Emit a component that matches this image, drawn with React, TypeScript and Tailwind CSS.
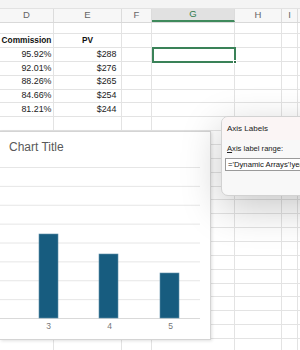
import React from "react";

const colW = ["w-[54px]", "w-[68px]", "w-[30px]", "w-[83px]", "w-[47px]", "w-[16px]", "w-[20px]"];
const letters = ["D", "E", "F", "G", "H", "I", ""];

const data: [string, string][] = [
  ["95.92%", "$288"],
  ["92.01%", "$276"],
  ["88.26%", "$265"],
  ["84.66%", "$254"],
  ["81.21%", "$244"],
];

function EmptyRow({ h }: { h: string }) {
  return (
    <div className={`flex ${h} shrink-0`}>
      {colW.map((w, i) => (
        <div key={i} className={`${w} shrink-0 border-r border-b border-[#e3e3e3]`} />
      ))}
    </div>
  );
}

export default function App() {
  const filler = Array.from({ length: 20 });
  return (
    <div className="relative w-[300px] h-[350px] overflow-hidden bg-white" style={{ fontFamily: '"Liberation Sans", Arial, sans-serif' }}>
      {/* top strip */}
      <div className="h-[9px] bg-[#f4f4f4] border-b border-[#e2e2e2]" />
      {/* column header */}
      <div className="flex h-[14px] bg-[#f7f7f7] border-b border-[#d9d9d9]">
        {colW.map((w, i) => (
          <div
            key={i}
            className={`${w} shrink-0 flex items-center justify-center text-[9.5px] border-r border-[#dcdcdc] ${
              i === 3 ? "bg-[#e1e1e1] text-[#2f7a4c] border-b-2 border-b-[#3f8a5c]" : "text-[#666666]"
            }`}
          >
            {letters[i]}
          </div>
        ))}
      </div>
      {/* rows */}
      <div className="flex flex-col">
        <EmptyRow h="h-[11px]" />
        <div className="flex h-[14px] shrink-0">
          <div className="w-[54px] shrink-0 border-r border-b border-[#e3e3e3] flex items-center justify-center text-[8.3px] font-bold text-[#111]">Commission</div>
          <div className="w-[68px] shrink-0 border-r border-b border-[#e3e3e3] flex items-center justify-center text-[8.3px] font-bold text-[#111]">PV</div>
          {colW.slice(2).map((w, i) => (
            <div key={i} className={`${w} shrink-0 border-r border-b border-[#e3e3e3]`} />
          ))}
        </div>
        {data.map(([a, b], r) => (
          <div key={r} className="flex h-[13.86px] shrink-0">
            <div className="w-[54px] shrink-0 border-r border-b border-[#e3e3e3] flex items-center justify-end pr-[1.5px] text-[8.9px] text-[#222]">{a}</div>
            <div className="w-[68px] shrink-0 border-r border-b border-[#e3e3e3] flex items-center justify-end pr-[4.5px] text-[8.9px] text-[#222]">{b}</div>
            {colW.slice(2).map((w, i) => (
              <div key={i} className={`${w} shrink-0 border-r border-b border-[#e3e3e3]`} />
            ))}
          </div>
        ))}
        {filler.map((_, i) => (
          <EmptyRow key={i} h="h-[13.86px]" />
        ))}
      </div>

      {/* selected cell G */}
      <div className="absolute left-[152px] top-[47px] w-[84px] h-[16px] border-2 border-[#3a8258]">
        <div className="absolute right-[-3px] bottom-[-3px] w-[4px] h-[4px] bg-[#2d6e47] border border-white" />
      </div>

      {/* chart */}
      <div className="absolute left-0 top-[131px] w-[211px] h-[209px] bg-white border border-l-0 border-[#d4d4d4] shadow-[1px_1px_3px_rgba(0,0,0,0.12)]">
        <div className="h-[35px] pl-[9px] pt-[6px] text-[12px] text-[#595959] leading-[18px]">Chart Title</div>
        <svg width="210" height="153" className="block">
          {Array.from({ length: 9 }).map((_, i) => (
            <line key={i} x1="0" x2="200" y1={0.5 + i * 18.875} y2={0.5 + i * 18.875} stroke={i === 8 ? "#d9d9d9" : "#e6e6e6"} strokeWidth="1" />
          ))}
          <rect x="39" y="67" width="19" height="84" fill="#175c7f" stroke="#5f8fa9" strokeWidth="0.6" />
          <rect x="99" y="87" width="19" height="64" fill="#175c7f" stroke="#5f8fa9" strokeWidth="0.6" />
          <rect x="160" y="106" width="19" height="45" fill="#175c7f" stroke="#5f8fa9" strokeWidth="0.6" />
        </svg>
        <div className="flex pl-[18px] text-[8.5px] text-[#777] leading-[12px]">
          <div className="w-[61px] text-center">3</div>
          <div className="w-[61px] text-center">4</div>
          <div className="w-[61px] text-center">5</div>
        </div>
      </div>

      {/* dialog */}
      <div className="absolute left-[221px] top-[116px] w-[200px] h-[80px] rounded-[7px] bg-[#f8f8f8] border border-[#d2d2d2] shadow-[0_12px_40px_rgba(0,0,0,0.22)] overflow-hidden">
        <div className="h-[23px] bg-[#fbf5f5] pl-[5px] flex items-center text-[8px] text-[#222]">Axis Labels</div>
        <div className="pl-[5px] pt-[4px] text-[7.6px] text-[#222] leading-[10px]">
          <span className="underline">A</span>xis label range:
        </div>
        <div className="ml-[3px] mt-[4px] h-[13px] bg-white border border-[#9a9a9a] pl-[2px] flex items-center text-[7.7px] text-[#111] whitespace-nowrap">
          ='Dynamic Arrays'!years
        </div>
      </div>
    </div>
  );
}
